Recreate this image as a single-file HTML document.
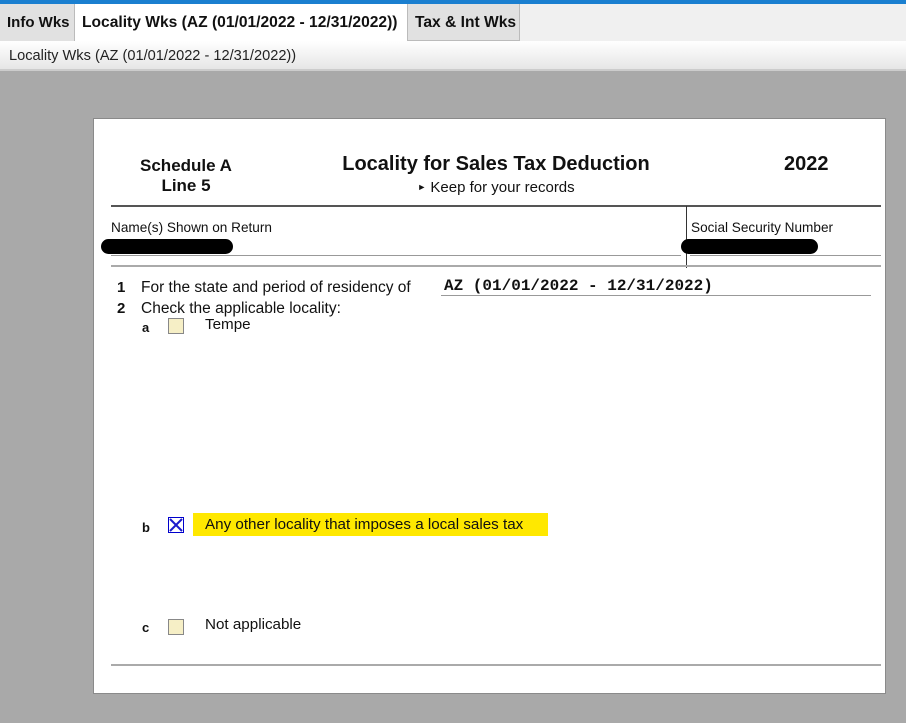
<!DOCTYPE html>
<html><head><meta charset="utf-8"><style>
*{margin:0;padding:0;box-sizing:border-box}
body{width:906px;height:723px;background:#a9a9a9;position:relative;overflow:hidden;font-family:"Liberation Sans",Arial,sans-serif;color:#111}
.a{position:absolute;white-space:nowrap}
.tab{position:absolute;top:4px;height:37px;font-size:15.6px;font-weight:bold;line-height:37px;padding-left:7px;border-right:1px solid #bbb;white-space:nowrap;overflow:hidden}
.n{font-family:"Liberation Sans Narrow","Liberation Sans",sans-serif}
.box{position:absolute;left:168px;width:16px;height:16px;background:#f6efc6;border:1px solid #888}
</style></head><body>
<div class="a" style="left:0;top:0;width:906px;height:4px;background:#1a7fd0"></div>
<div class="a" style="left:0;top:4px;width:906px;height:37px;background:#f0f0f0"></div>
<div class="tab" style="left:0;width:75px;background:#e1e1e1;font-size:15px">Info Wks</div>
<div class="tab" style="left:75px;width:333px;background:#fff;height:38px">Locality Wks (AZ (01/01/2022 - 12/31/2022))</div>
<div class="tab" style="left:408px;width:112px;background:#e1e1e1;border-bottom:1px solid #bbb">Tax &amp; Int Wks</div>
<div class="a" style="left:0;top:41px;width:906px;height:30px;background:linear-gradient(#fff,#e6e6e6);border-bottom:2px solid #ccc;font-size:14.6px;line-height:30px;padding-left:9px;color:#222">Locality Wks (AZ (01/01/2022 - 12/31/2022))</div>
<div class="a" style="left:93px;top:118px;width:793px;height:576px;background:#fff;border:1px solid #8a8a8a"></div>
<div class="a n" style="left:126px;top:156px;width:120px;text-align:center;font-weight:bold;font-size:17px;line-height:20px">Schedule A<br>Line 5</div>
<div class="a n" style="left:296px;top:153px;width:400px;text-align:center;font-weight:bold;font-size:20px">Locality for Sales Tax Deduction</div>
<div class="a n" style="left:296px;top:179px;width:400px;text-align:center;font-size:15px"><span style="font-size:9px;vertical-align:2px">►</span> Keep for your records</div>
<div class="a n" style="left:784px;top:153px;font-weight:bold;font-size:20px">2022</div>
<div class="a" style="left:111px;top:205px;width:770px;height:2px;background:#555"></div>
<div class="a" style="left:686px;top:206px;width:1px;height:62px;background:#333"></div>
<div class="a n" style="left:111px;top:220px;font-size:13.6px">Name(s) Shown on Return</div>
<div class="a n" style="left:691px;top:220px;font-size:13.6px">Social Security Number</div>
<div class="a" style="left:101px;top:239px;width:132px;height:15px;background:#000;border-radius:8px"></div>
<div class="a" style="left:681px;top:239px;width:137px;height:15px;background:#000;border-radius:8px"></div>
<div class="a" style="left:111px;top:255px;width:570px;height:1px;background:#999"></div>
<div class="a" style="left:690px;top:255px;width:191px;height:1px;background:#999"></div>
<div class="a" style="left:111px;top:265px;width:770px;height:2px;background:#aaa"></div>
<div class="a n" style="left:117px;top:279px;font-size:15px"><b>1</b></div>
<div class="a n" style="left:141px;top:279px;font-size:15.5px">For the state and period of residency of</div>
<div class="a" style="left:444px;top:277px;font-family:'Liberation Mono',monospace;font-weight:bold;font-size:16px">AZ (01/01/2022 - 12/31/2022)</div>
<div class="a" style="left:441px;top:295px;width:430px;height:1px;background:#999"></div>
<div class="a n" style="left:117px;top:300px;font-size:15px"><b>2</b></div>
<div class="a n" style="left:141px;top:300px;font-size:15.5px">Check the applicable locality:</div>
<div class="a" style="left:142px;top:320px;font-size:13px;font-weight:bold">a</div>
<div class="box" style="top:318px"></div>
<div class="a" style="left:205px;top:316px;font-size:15.2px">Tempe</div>
<div class="a" style="left:142px;top:520px;font-size:13px;font-weight:bold">b</div>
<div class="box" style="top:517px;background:#fff;border-color:#00c"><svg width="14" height="14" style="display:block"><path d="M1 1L13 13M13 1L1 13" stroke="#1a1acc" stroke-width="2"/></svg></div>
<div class="a" style="left:193px;top:513px;width:355px;height:23px;background:#ffe800"></div>
<div class="a" style="left:205px;top:516px;font-size:15.2px">Any other locality that imposes a local sales tax</div>
<div class="a" style="left:142px;top:620px;font-size:13px;font-weight:bold">c</div>
<div class="box" style="top:619px"></div>
<div class="a" style="left:205px;top:616px;font-size:15.2px">Not applicable</div>
<div class="a" style="left:111px;top:664px;width:770px;height:2px;background:#aaa"></div>
</body></html>
